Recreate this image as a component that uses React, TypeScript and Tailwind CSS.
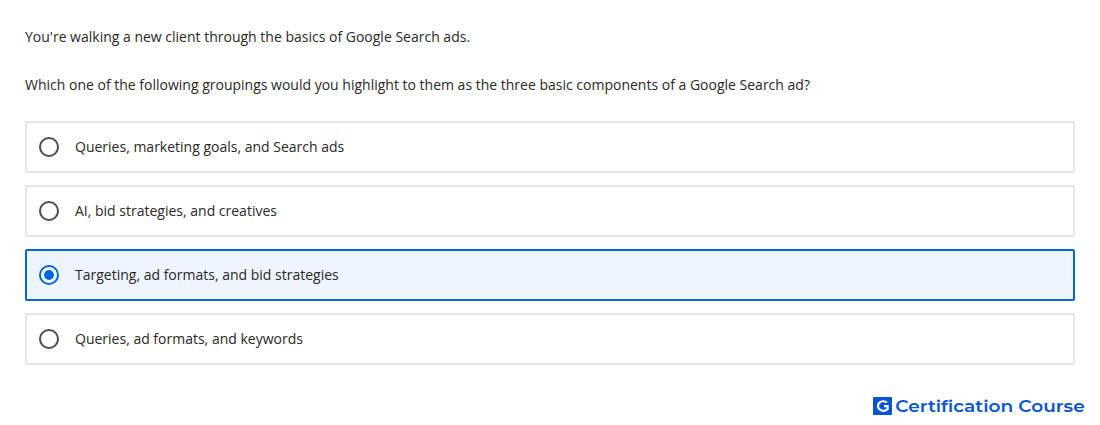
import React, { useState } from "react";

const answers = [
  "Queries, marketing goals, and Search ads",
  "AI, bid strategies, and creatives",
  "Targeting, ad formats, and bid strategies",
  "Queries, ad formats, and keywords",
];

const Radio = ({ checked }: { checked: boolean }) => (
  <span
    className={`flex h-5 w-5 shrink-0 items-center justify-center rounded-full border-2 bg-white ${
      checked ? "border-[#0068da]" : "border-[#454c59]"
    }`}
  >
    {checked ? (
      <span className="h-2.5 w-2.5 rounded-full bg-[#0068da]" />
    ) : null}
  </span>
);

const Answer = ({
  text,
  checked,
  onSelect,
}: {
  text: string;
  checked: boolean;
  onSelect: () => void;
}) => (
  <div
    role="radio"
    aria-checked={checked}
    className={`flex h-[52px] cursor-pointer items-center gap-4 rounded-[2px] border-2 px-3 ${
      checked ? "border-[#0068da] bg-[#eff5ff]" : "border-[#e6e6e6] bg-white"
    }`}
    onClick={onSelect}
  >
    <Radio checked={checked} />
    <span>{text}</span>
  </div>
);

const Brand = () => (
  <div className="mt-[30px] flex items-center justify-end pr-[15px] text-[#0554d4]">
    <svg width="19" height="18" viewBox="0 0 19 18">
      <rect width="19" height="18" rx="0.8" fill="currentColor" />
      <path
        d="M14 5.5A5.4 4.8 0 1 0 14.6 12V9.2H11"
        fill="none"
        stroke="#fff"
        strokeWidth="2.2"
      />
    </svg>
    <span className="flex w-[193px] justify-end">
      <span className="origin-right scale-x-[1.09] font-['Montserrat','Open_Sans',sans-serif] text-[17px] leading-[22px] font-semibold whitespace-nowrap">
        Certification Course
      </span>
    </span>
  </div>
);

export default function App() {
  const [selected, setSelected] = useState(2);

  return (
    <div className="h-[425px] w-[1100px] overflow-hidden bg-white pt-[25px] font-['Open_Sans',sans-serif] text-sm leading-6 text-[#282828]">
      <div className="px-[25px]">
        <p>You're walking a new client through the basics of Google Search ads.</p>
        <p className="mt-6">
          Which one of the following groupings would you highlight to them as
          the three basic components of a Google Search ad?
        </p>
        <div role="radiogroup" className="mt-6 flex flex-col gap-3">
          {answers.map((text, index) => (
            <Answer
              key={text}
              text={text}
              checked={index === selected}
              onSelect={() => setSelected(index)}
            />
          ))}
        </div>
      </div>
      <Brand />
    </div>
  );
}
